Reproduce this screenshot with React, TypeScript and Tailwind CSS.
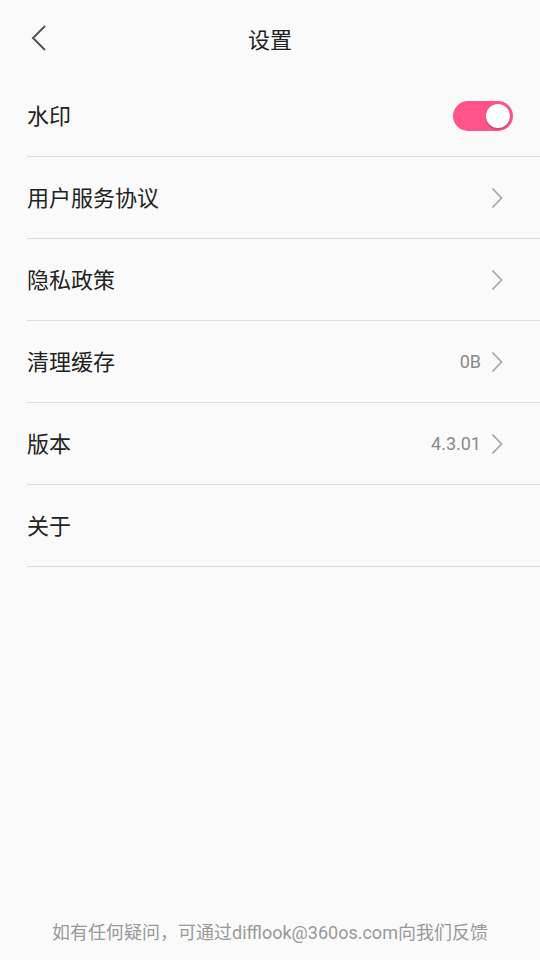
import React, { useState } from "react";

const ChevronRight = () => (
  <svg width="12" height="22" viewBox="0 0 12 22" fill="none">
    <path d="M1.5 1.5 L10.5 11 L1.5 20.5" stroke="#a8a8a8" strokeWidth="1.8" />
  </svg>
);

const rows: { label: string; value?: string; arrow?: boolean }[] = [
  { label: "用户服务协议", arrow: true },
  { label: "隐私政策", arrow: true },
  { label: "清理缓存", value: "0B", arrow: true },
  { label: "版本", value: "4.3.01", arrow: true },
  { label: "关于" },
];

export default function App() {
  const [on, setOn] = useState(true);

  return (
    <div
      className="w-[540px] h-[960px] bg-[#fafafa] flex flex-col"
      style={{ fontFamily: '"Noto Sans CJK SC", "Noto Sans", Roboto, sans-serif' }}
    >
      {/* header */}
      <div className="h-[75px] flex items-center relative shrink-0">
        <button className="absolute left-[30px] top-[24px]">
          <svg width="18" height="28" viewBox="0 0 18 28" fill="none">
            <path d="M15 2 L3 14 L15 26" stroke="#555" strokeWidth="2" />
          </svg>
        </button>
        <div className="w-full text-center text-[22px] text-[#222] leading-none">设置</div>
      </div>

      {/* list */}
      <div className="pl-[27px]">
        <div className="h-[82px] flex items-center justify-between pr-[27px] border-b border-[#dedede]">
          <span className="text-[22px] text-[#222] -mt-[2px]">水印</span>
          <button
            onClick={() => setOn(!on)}
            className={`w-[60px] h-[30px] rounded-full flex items-center px-[3px] ${on ? "bg-[#ff5487] justify-end" : "bg-[#ccc] justify-start"}`}
          >
            <span className="w-[24px] h-[24px] rounded-full bg-white shadow-[0_1px_2px_rgba(0,0,0,0.3)]" />
          </button>
        </div>
        {rows.map((r) => (
          <div
            key={r.label}
            className="h-[82px] flex items-center justify-between pr-[37px] border-b border-[#dedede]"
          >
            <span className="text-[22px] text-[#222] -mt-[2px]">{r.label}</span>
            <div className="flex items-center gap-[10px]">
              {r.value && (
                <span className="text-[18px] text-[#8a8a8a]" style={{ fontFamily: "Roboto, sans-serif" }}>
                  {r.value}
                </span>
              )}
              {r.arrow && <ChevronRight />}
            </div>
          </div>
        ))}
      </div>

      <div className="flex-1" />

      <div className="mb-[15px] leading-[24px] text-center text-[18px] text-[#999] shrink-0">
        如有任何疑问，可通过
        <span style={{ fontFamily: "Roboto, sans-serif" }}>difflook@360os.com</span>
        向我们反馈
      </div>
    </div>
  );
}
